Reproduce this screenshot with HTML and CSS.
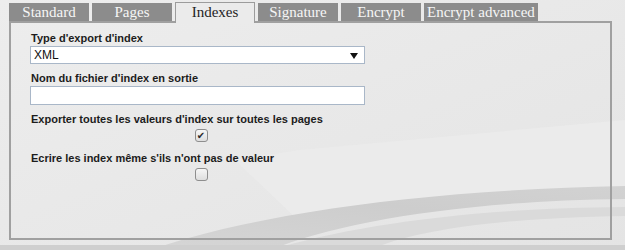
FILE: index.html
```html
<!DOCTYPE html>
<html lang="fr">
<head>
<meta charset="utf-8">
<title>Indexes</title>
<link rel="stylesheet" href="styles.css">
</head>
<body>
<div class="page">
  <svg class="bg" width="625" height="250" viewBox="0 0 625 250" aria-hidden="true">
    <defs>
      <linearGradient id="g1" x1="0" y1="0" x2="1" y2="1">
        <stop offset="0" stop-color="#ededed"/>
        <stop offset="1" stop-color="#e4e4e4"/>
      </linearGradient>
      <linearGradient id="band" x1="0" y1="1" x2="1" y2="0">
        <stop offset="0" stop-color="#d6d6d6"/>
        <stop offset="0.6" stop-color="#cdcdcd"/>
        <stop offset="1" stop-color="#d2d2d2"/>
      </linearGradient>
    </defs>
    <rect width="625" height="250" fill="url(#g1)"/>
    <path d="M235,160 L300,150 L625,120 L625,190 C 470,192 360,205 300,222 Z" fill="#ebebeb"/>
    <path d="M150,250 C 260,212 430,190 625,186 L625,199 C 460,201 340,222 270,250 Z" fill="url(#band)"/>
    <path d="M270,250 C 350,226 470,208 625,207 L625,216 C 490,218 410,232 370,250 Z" fill="#dadada"/>
    <rect y="245" width="625" height="5" fill="#cfcfcf"/>
  </svg>

  <div class="tabs">
    <div class="tab">Standard</div>
    <div class="tab">Pages</div>
    <div class="tab active">Indexes</div>
    <div class="tab">Signature</div>
    <div class="tab">Encrypt</div>
    <div class="tab wide">Encrypt advanced</div>
  </div>

  <div class="panel">
    <div class="form">
      <div class="field">
        <label class="lbl">Type d'export d'index</label>
        <div class="select-wrap">
          <select class="select"><option>XML</option></select>
        </div>
      </div>
      <div class="field">
        <label class="lbl">Nom du fichier d'index en sortie</label>
        <input class="text" type="text" value="">
      </div>
      <div class="field">
        <label class="lbl">Exporter toutes les valeurs d'index sur toutes les pages</label>
        <div class="cb-row"><span class="cb checked">✔</span></div>
      </div>
      <div class="field">
        <label class="lbl">Ecrire les index même s'ils n'ont pas de valeur</label>
        <div class="cb-row"><span class="cb"></span></div>
      </div>
    </div>
  </div>
</div>
</body>
</html>
```

FILE: styles.css
```css
* { box-sizing: border-box; }

html, body {
  margin: 0;
  padding: 0;
  background: #e8e8e8;
}

.page {
  position: relative;
  width: 625px;
  height: 250px;
  overflow: hidden;
}

.bg {
  position: absolute;
  left: 0;
  top: 0;
  z-index: 0;
}

.tabs {
  position: relative;
  z-index: 2;
  display: flex;
  align-items: flex-start;
  gap: 3px;
  height: 21px;
  padding: 3px 0 0 9px;
}

.tab {
  width: 80px;
  height: 18px;
  background: #8c8c8c;
  color: #f6f6f6;
  font-family: "Liberation Serif", "Times New Roman", serif;
  font-size: 15px;
  line-height: 18px;
  text-align: center;
  white-space: nowrap;
}

.tab.wide {
  width: auto;
  padding: 0 3px;
}

.tab.active {
  height: 21px;
  margin-top: -1px;
  background: #ebebeb;
  color: #1e1e1e;
  border: 1px solid #9c9c9c;
  border-bottom: none;
  line-height: 19px;
}

.panel {
  position: relative;
  z-index: 1;
  margin-left: 9px;
  width: 603px;
  height: 219px;
  border: 2px solid #a0a0a0;
}

.form {
  padding: 8px 0 0 19px;
}

.field {
  margin-bottom: 7px;
}

.lbl {
  display: block;
  padding-left: 1px;
  font-family: "Liberation Sans", Arial, sans-serif;
  font-weight: bold;
  font-size: 11px;
  line-height: 15px;
  color: #1c1c1c;
}

.select-wrap {
  position: relative;
  width: 335px;
}

.select-wrap::after {
  content: "";
  position: absolute;
  right: 7px;
  top: 7px;
  border-left: 4px solid transparent;
  border-right: 4px solid transparent;
  border-top: 6px solid #111;
  pointer-events: none;
}

.select {
  display: block;
  width: 335px;
  height: 18px;
  margin: 0;
  padding: 0 0 0 3px;
  -webkit-appearance: none;
  appearance: none;
  border: 1px solid #a9b7c8;
  border-radius: 0;
  background: #fff;
  font-family: "Liberation Sans", Arial, sans-serif;
  font-size: 12px;
  color: #111;
}

.text {
  display: block;
  width: 335px;
  height: 19px;
  margin: 0 0 1px 0;
  padding: 0 3px;
  border: 1px solid #a9b7c8;
  background: #fff;
  font-family: "Liberation Sans", Arial, sans-serif;
  font-size: 12px;
}

.cb-row {
  width: 342px;
  display: flex;
  justify-content: center;
  padding-top: 2px;
}

.cb {
  width: 13px;
  height: 13px;
  border: 1px solid #8e8e8e;
  border-radius: 3px;
  background: linear-gradient(#f6f6f6, #dedede);
  color: #2a2a2a;
  font-size: 10px;
  line-height: 12px;
  text-align: center;
  font-family: "DejaVu Sans", sans-serif;
}

.field:nth-child(3) {
  margin-bottom: 9px;
}
```
